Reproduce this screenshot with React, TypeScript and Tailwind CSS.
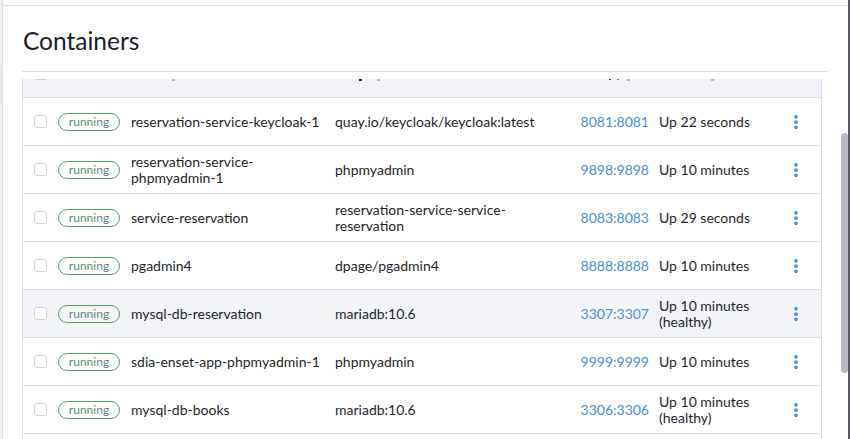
import { EllipsisVertical } from 'lucide-react'

const ROWS = [
  { name: 'reservation-service-keycloak-1', image: 'quay.io/keycloak/keycloak:latest', port: '8081:8081', status: 'Up 22 seconds' },
  { name: 'reservation-service-phpmyadmin-1', image: 'phpmyadmin', port: '9898:9898', status: 'Up 10 minutes' },
  { name: 'service-reservation', image: 'reservation-service-service-reservation', port: '8083:8083', status: 'Up 29 seconds' },
  { name: 'pgadmin4', image: 'dpage/pgadmin4', port: '8888:8888', status: 'Up 10 minutes' },
  { name: 'mysql-db-reservation', image: 'mariadb:10.6', port: '3307:3307', status: 'Up 10 minutes (healthy)', hover: true },
  { name: 'sdia-enset-app-phpmyadmin-1', image: 'phpmyadmin', port: '9999:9999', status: 'Up 10 minutes' },
  { name: 'mysql-db-books', image: 'mariadb:10.6', port: '3306:3306', status: 'Up 10 minutes (healthy)' },
]

const COLS = 'grid grid-cols-[35px_73px_204px_242px_82px_126px_1fr]'

function Row({ row }: { row: (typeof ROWS)[number] }) {
  return (
    <div
      className={`${COLS} h-[48px] items-center border-b border-[#dcdde6] text-[14px] leading-4 text-[#1d1f2c] ${
        row.hover ? 'bg-[#f3f4f8]' : 'bg-white'
      }`}
    >
      <div className="pl-[11px]">
        <div className="w-[13px] h-[13px] rounded-[3px] border border-[#d3d4dc] bg-white" />
      </div>
      <div>
        <span className="inline-flex items-center justify-center w-[62px] h-[18px] rounded-full border border-[#559d62] text-[12px] text-[#5e8a78]">
          running
        </span>
      </div>
      <div className="pr-2">{row.name}</div>
      <div className="pr-2 break-words">{row.image}</div>
      <div className="pr-[10px] text-right text-[#4a90d4]">{row.port}</div>
      <div className="pr-2">{row.status}</div>
      <div className="pl-[2px]">
        <EllipsisVertical size={18} strokeWidth={3} className="text-[#3b8bd9]" />
      </div>
    </div>
  )
}

export default function App() {
  return (
    <div className="w-[850px] h-[439px] overflow-hidden bg-white flex font-['Lato',sans-serif]">
      {/* sidebar edge */}
      <div className="w-[2px] shrink-0 flex flex-col bg-[#f1f1f5]">
        <div className="h-[65px]" />
        <div className="h-[40px] bg-[#e6e6ee]" />
      </div>
      <div className="w-px shrink-0 bg-[#dedee6]" />

      {/* panel */}
      <div className="flex-1 flex flex-col min-w-0">
        <div className="h-[5px] bg-white" />
        <div className="flex flex-1 border-t border-[#dedee6] min-h-0">
          <div className="flex flex-col pl-[19px] min-h-0 shrink-0">
            <h1 className="w-[806px] pt-[20px] pb-[15px] pl-px text-[24.5px] leading-[30px] text-[#1b1d2b] border-b border-[#dcdde6]">
              Containers
            </h1>
            <div className="w-[800px] mt-[7px] flex-1 min-h-0 border-x border-[#dcdde6] overflow-hidden">
              {/* header, scrolled partly out of view */}
              <div className="relative h-[19px] bg-[#f2f3f8] border-b border-[#dcdde6]">
                <span className="absolute left-[12px] top-0 w-[11px] h-px bg-[#cfd0d8]" />
                <span className="absolute left-[149px] top-0 w-[3px] h-[2px] bg-[#b8b8c0]" />
                <span className="absolute left-[336px] top-0 w-[3px] h-[2px] bg-[#1d1f2c]" />
                <span className="absolute left-[354px] top-0 w-[3px] h-[2px] bg-[#b8b8c0]" />
                <span className="absolute left-[586px] top-0 w-[2px] h-px bg-[#7a2030]" />
                <span className="absolute left-[594px] top-0 w-[2px] h-px bg-[#7a7a30]" />
                <span className="absolute left-[604px] top-0 w-[3px] h-[2px] bg-[#b8b8c0]" />
                <span className="absolute left-[688px] top-0 w-[3px] h-[2px] bg-[#b8b8c0]" />
              </div>
              {ROWS.map(r => (
                <Row key={r.name} row={r} />
              ))}
            </div>
          </div>

          {/* scrollbar */}
          <div className="ml-auto w-[7px] shrink-0 flex flex-col pt-[127px]">
            <div className="w-[7px] h-[240px] rounded-full bg-[#b9b9c4]" />
          </div>
        </div>
      </div>
      <div className="w-[2px] shrink-0 bg-[#5a5a62]" />
    </div>
  )
}
